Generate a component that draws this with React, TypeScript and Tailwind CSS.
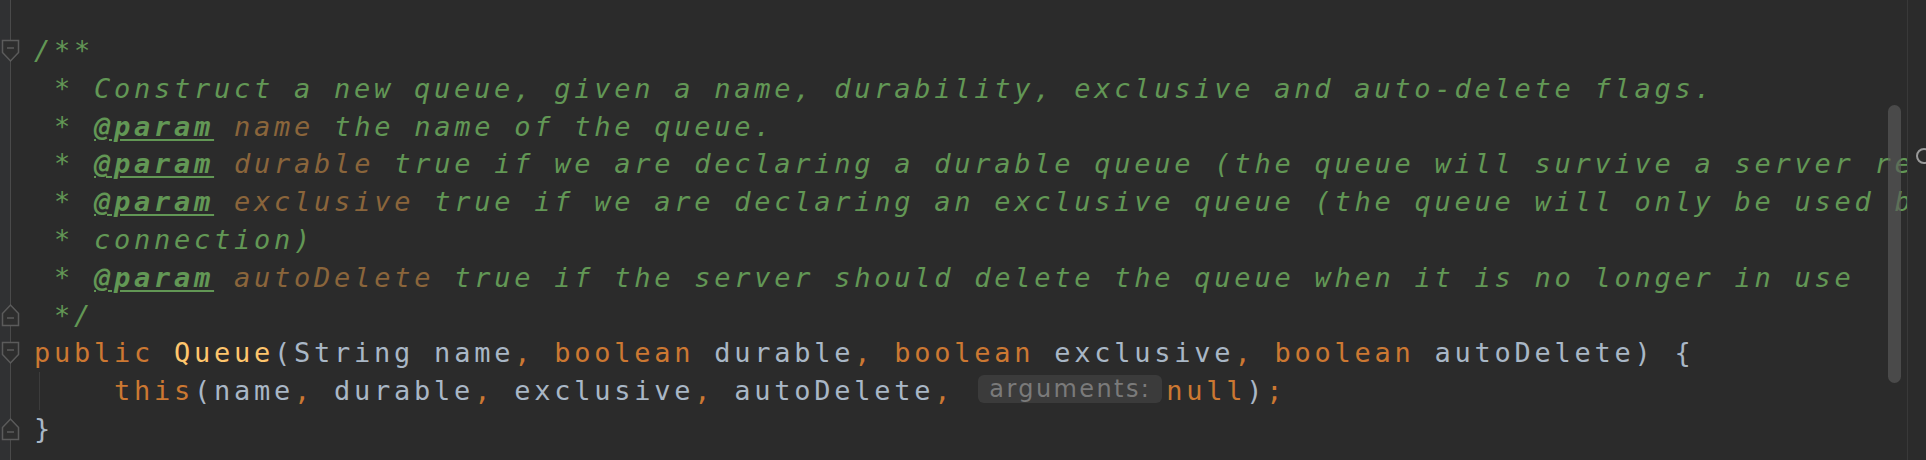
type Seg = [string, string];

const DOC = "italic text-[#629755]";
const TAG = "italic font-bold text-[#629755] underline decoration-2 underline-offset-[3px]";
const PARAM = "italic text-[#8a653b]";
const KW = "text-[#cc7832]";
const FN = "text-[#ffc66d]";
const TXT = "text-[#a9b7c6]";

const lines: Seg[][] = [
  [["/**", DOC]],
  [[" * Construct a new queue, given a name, durability, exclusive and auto-delete flags.", DOC]],
  [[" * ", DOC], ["@param", TAG], [" ", DOC], ["name", PARAM], [" the name of the queue.", DOC]],
  [
    [" * ", DOC],
    ["@param", TAG],
    [" ", DOC],
    ["durable", PARAM],
    [" true if we are declaring a durable queue (the queue will survive a server restart)", DOC],
  ],
  [
    [" * ", DOC],
    ["@param", TAG],
    [" ", DOC],
    ["exclusive", PARAM],
    [" true if we are declaring an exclusive queue (the queue will only be used by the declaring", DOC],
  ],
  [[" * connection)", DOC]],
  [
    [" * ", DOC],
    ["@param", TAG],
    [" ", DOC],
    ["autoDelete", PARAM],
    [" true if the server should delete the queue when it is no longer in use", DOC],
  ],
  [[" */", DOC]],
  [
    ["public ", KW],
    ["Queue", FN],
    ["(String name", TXT],
    [", ", KW],
    ["boolean ", KW],
    ["durable", TXT],
    [", ", KW],
    ["boolean ", KW],
    ["exclusive", TXT],
    [", ", KW],
    ["boolean ", KW],
    ["autoDelete) {", TXT],
  ],
];

// fold markers in the gutter, by line index
const folds: Record<number, "start" | "end"> = { 0: "start", 7: "end", 8: "start", 10: "end" };

const FoldMarker = ({ kind }: { kind: "start" | "end" }) =>
  kind === "start" ? (
    <svg width="19" height="24" viewBox="0 0 19 24">
      <path d="M1.5 1.5H17.5V13.5L9.5 22L1.5 13.5Z" fill="#2e2e2e" stroke="#5b5b5b" strokeWidth="1.5" />
      <path d="M6 9H13" stroke="#5b5b5b" strokeWidth="1.5" />
    </svg>
  ) : (
    <svg width="19" height="24" viewBox="0 0 19 24">
      <path d="M1.5 22.5H17.5V10.5L9.5 2L1.5 10.5Z" fill="#2e2e2e" stroke="#5b5b5b" strokeWidth="1.5" />
      <path d="M6 15H13" stroke="#5b5b5b" strokeWidth="1.5" />
    </svg>
  );

export default function App() {
  return (
    <div className="w-[1926px] h-[460px] bg-[#2b2b2b] flex overflow-hidden font-['DejaVu_Sans_Mono',monospace] text-[27px] leading-[37.8px] tracking-[3.75px]">
      {/* gutter */}
      <div className="w-[34px] shrink-0 flex flex-col pt-[32px] bg-[linear-gradient(to_right,#303133_0,#303133_10px,#4a4a4a_10px,#4a4a4a_11px,transparent_11px)]">
        {Array.from({ length: 11 }).map((_, i) => (
          <div key={i} className="h-[37.8px] flex items-center pl-[1px]">
            {folds[i] && <FoldMarker kind={folds[i]} />}
          </div>
        ))}
      </div>

      {/* code */}
      <div className="relative flex-1 overflow-hidden pt-[32px] whitespace-pre">
        {lines.map((segs, i) => (
          <div key={i} className="h-[37.8px]">
            {segs.map(([t, c], j) => (
              <span key={j} className={c}>
                {t}
              </span>
            ))}
          </div>
        ))}
        <div className="h-[37.8px] flex items-start">
          <div className="w-[80px] h-full pl-[5px]">
            <div className="w-px h-full bg-[#3c3c3c]" />
          </div>
          <span className={KW}>this</span>
          <span className={TXT}>(name</span>
          <span className={KW}>, </span>
          <span className={TXT}>durable</span>
          <span className={KW}>, </span>
          <span className={TXT}>exclusive</span>
          <span className={KW}>, </span>
          <span className={TXT}>autoDelete</span>
          <span className={KW}>, </span>
          <div className="mt-[3px] ml-[4px] mr-[4px] h-[28px] w-[184px] rounded-[6px] bg-[#3b3b3b] flex items-center justify-center font-['DejaVu_Sans',sans-serif] text-[24px] leading-none tracking-[2.4px] text-[#7a7a7a]">
            arguments:
          </div>
          <span className={KW}>null</span>
          <span className={TXT}>)</span>
          <span className={KW}>;</span>
        </div>
        <div className="h-[37.8px]">
          <span className={TXT}>{"}"}</span>
        </div>

        {/* scrollbar thumb */}
        <div className="absolute right-[6px] top-[105px] w-[13px] h-[278px] rounded-full bg-[rgba(90,90,90,0.65)]" />
      </div>

      {/* error stripe */}
      <div className="w-[19px] shrink-0 border-l border-[#393939] flex flex-col">
        <div className="mt-[148px] ml-[8px] w-[16px] h-[16px] rounded-full border-2 border-[#9a9a9a] shrink-0" />
      </div>
    </div>
  );
}
